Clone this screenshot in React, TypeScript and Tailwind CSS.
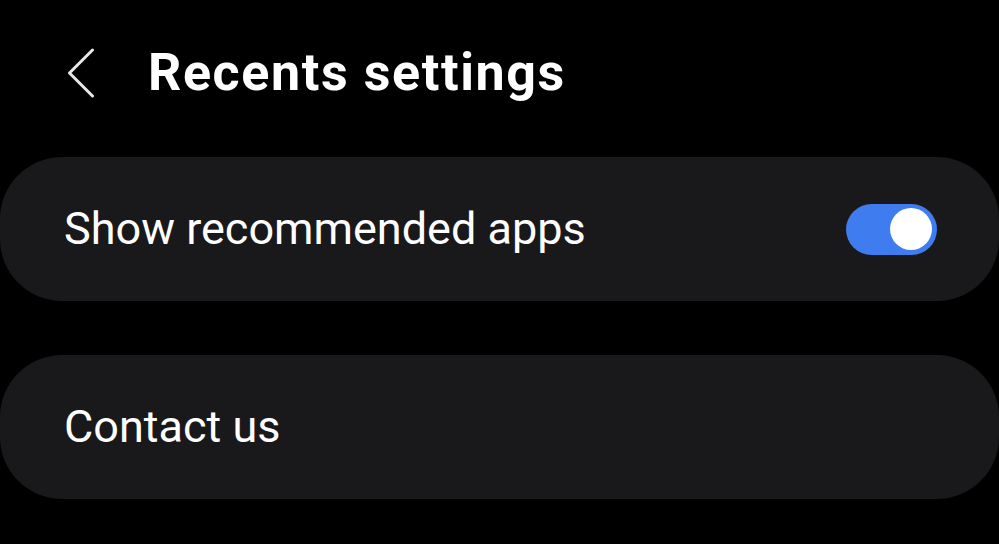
export default function App() {
  return (
    <div className="w-[999px] h-[544px] bg-black overflow-hidden" style={{ fontFamily: "Roboto, 'Noto Sans', sans-serif" }}>
      <div className="flex items-center h-[150px]">
        <div className="w-[148px] h-[150px] flex items-center pl-[67px] pb-[4px]">
          <svg width="28" height="50" viewBox="0 0 28 50" fill="none">
            <path d="M25.5 2 L2.5 25 L25.5 48" stroke="#e8e8e8" strokeWidth="3" strokeLinecap="round" strokeLinejoin="round" />
          </svg>
        </div>
        <h1 className="text-white text-[52px] font-bold leading-none tracking-[1.6px] pb-[4px]">Recents settings</h1>
      </div>
      <div className="flex flex-col gap-[54px] mt-[7px]">
        <div className="h-[144px] bg-[#19191b] rounded-[62px] flex items-center justify-between pl-[64px] pr-[62px]">
          <span className="text-white text-[45px] leading-none pb-[2px]">Show recommended apps</span>
          <div className="w-[91px] h-[51px] rounded-full bg-[#3e7cf0] flex items-center justify-end pr-[5px]">
            <div className="w-[42px] h-[42px] rounded-full bg-white" />
          </div>
        </div>
        <div className="h-[144px] bg-[#19191b] rounded-[62px] flex items-center pl-[64px]">
          <span className="text-white text-[45px] leading-none pb-[2px]">Contact us</span>
        </div>
      </div>
    </div>
  );
}
